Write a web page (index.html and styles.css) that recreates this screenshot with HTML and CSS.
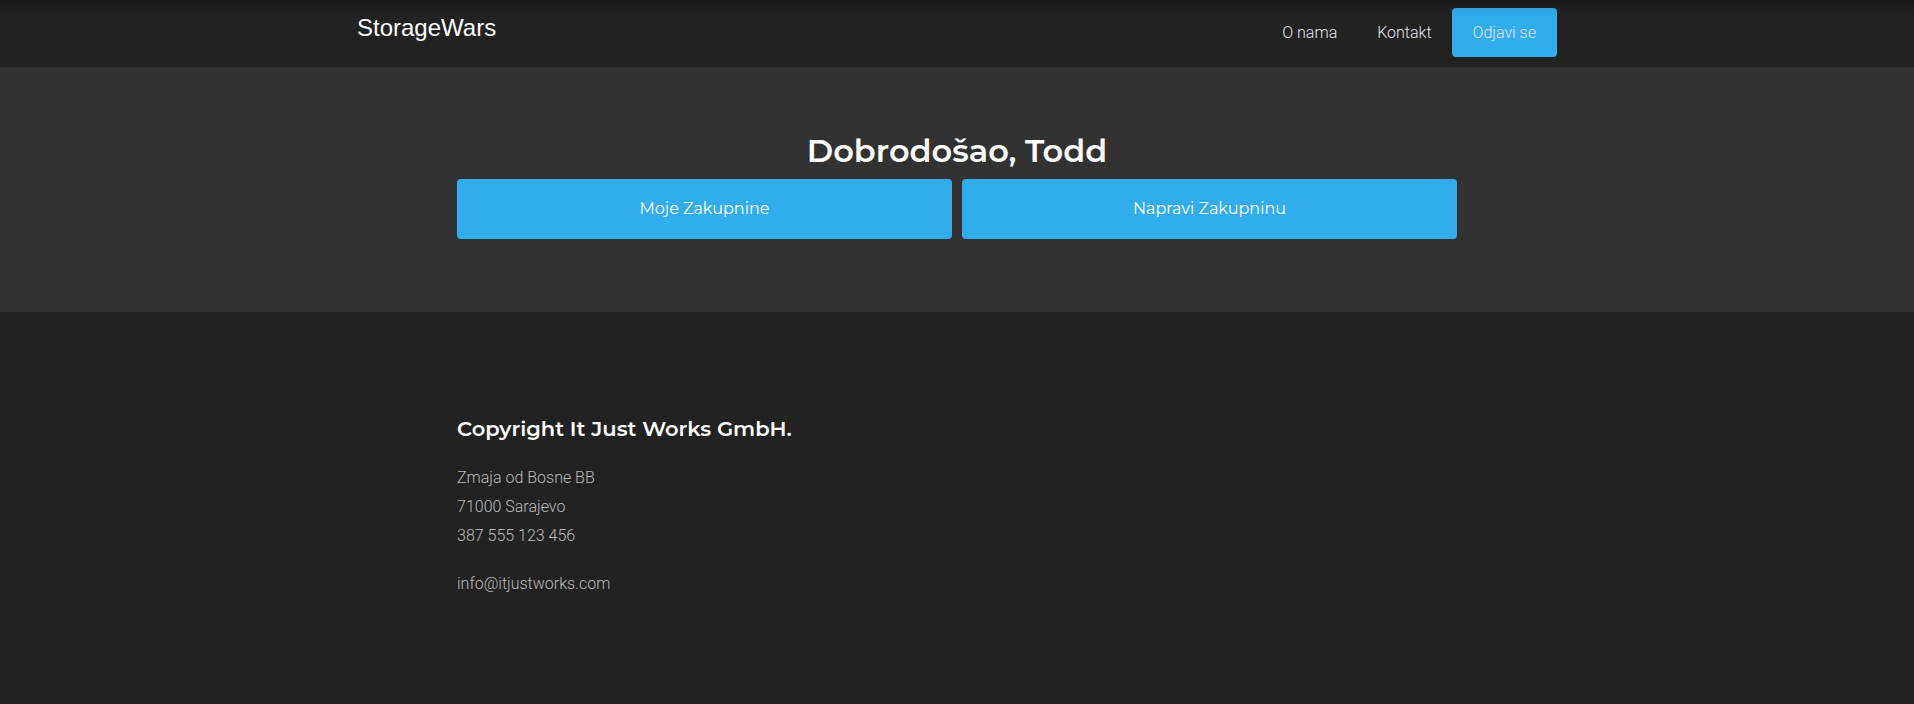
FILE: index.html
```html
<!DOCTYPE html>
<html lang="bs">
<head>
<meta charset="utf-8">
<meta name="viewport" content="width=device-width, initial-scale=1">
<title>StorageWars</title>
<link rel="stylesheet" href="styles.css">
</head>
<body>
<header class="site-header">
  <div class="header-inner">
    <a class="brand" href="#">StorageWars</a>
    <nav class="nav">
      <a class="nav-link" href="#">O nama</a>
      <a class="nav-link" href="#">Kontakt</a>
      <a class="nav-link nav-button" href="#">Odjavi se</a>
    </nav>
  </div>
</header>
<main class="hero">
  <div class="container">
    <h1 class="hero-title">Dobrodošao, Todd</h1>
    <div class="actions">
      <button class="action" type="button">Moje Zakupnine</button>
      <button class="action" type="button">Napravi Zakupninu</button>
    </div>
  </div>
</main>
<footer class="site-footer">
  <div class="container">
    <h2 class="footer-title">Copyright It Just Works GmbH.</h2>
    <address class="address">
      <p class="lines">Zmaja od Bosne BB<br>71000 Sarajevo<br>387 555 123 456</p>
      <p class="lines"><a class="mail" href="mailto:info@itjustworks.com">info@itjustworks.com</a></p>
    </address>
  </div>
</footer>
</body>
</html>
```
FILE: styles.css
```css
*, *::before, *::after { box-sizing: border-box; }

body {
  margin: 0;
  background: #222;
  color: #bbb;
  font: 300 16px/29px Roboto, sans-serif;
}

a { color: inherit; text-decoration: none; }

.site-header { position: relative; padding: 8px 16px 10px; }

/* Soft shade falling over the bar from the top edge */
.site-header::after {
  content: "";
  position: absolute;
  inset: 0 0 auto;
  height: 18px;
  background: linear-gradient(rgba(0, 0, 0, 0.28), rgba(0, 0, 0, 0.06) 50%, transparent);
  pointer-events: none;
}

.header-inner {
  display: flex;
  align-items: flex-start;
  justify-content: space-between;
  max-width: 1200px;
  margin: 0 auto;
}

.brand { color: #fff; font: 400 24px/40px "Liberation Sans", Arial, sans-serif; }

.nav { display: flex; }
.nav-link { padding: 10px 20px; color: #e6e2ee; }
.nav-button { padding: 10px 21px; border-radius: 4px; background: #31adee; }

.container { max-width: 1000px; margin: 0 auto; }

.hero { padding: 64px 16px 73px; background: #323232; }

.hero-title {
  margin: 0 0 8px;
  color: #fff;
  font: 600 32px/40px Montserrat, Inter, sans-serif;
  text-align: center;
}

.actions { display: grid; grid-template-columns: 1fr 1fr; gap: 10px; }

.action {
  padding: 16px;
  border: 0;
  border-radius: 4px;
  background: #31adee;
  color: #fff;
  font: 400 16px/28px Montserrat, Inter, sans-serif;
  cursor: pointer;
}

.site-footer { padding: 103px 16px 96px; }

.footer-title {
  margin: 0 0 20px;
  color: #fff;
  font: 600 21px/28px Montserrat, Inter, sans-serif;
}

.address { font-style: normal; }
.lines { margin: 0 0 19px; }
```
